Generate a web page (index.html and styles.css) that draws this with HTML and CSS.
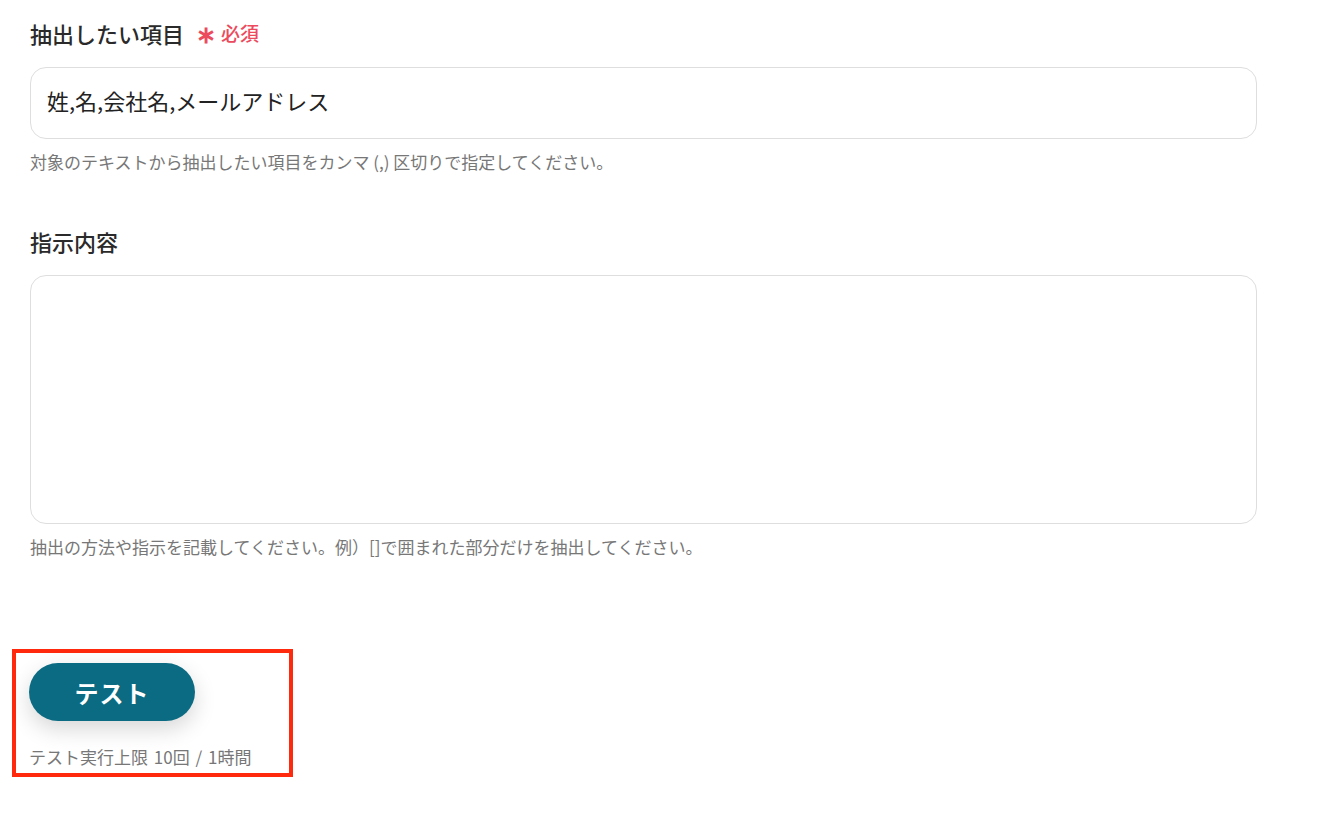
FILE: index.html
```html
<!DOCTYPE html>
<html lang="ja">
<head>
<meta charset="utf-8">
<title>抽出設定</title>
<link rel="stylesheet" href="styles.css">
</head>
<body>
<main class="form">
  <section class="field field-first">
    <div class="label">抽出したい項目<span class="required"><span class="star">∗</span>必須</span></div>
    <div class="input">姓,名,会社名,メールアドレス</div>
    <p class="help">対象のテキストから抽出したい項目をカンマ (,) 区切りで指定してください。</p>
  </section>
  <section class="field field-second">
    <div class="label">指示内容</div>
    <div class="textarea"></div>
    <p class="help">抽出の方法や指示を記載してください。例）[]で囲まれた部分だけを抽出してください。</p>
  </section>
  <div class="test-box">
    <button class="test-btn" type="button">テスト</button>
    <p class="limit">テスト実行上限 10回 / 1時間</p>
  </div>
</main>
</body>
</html>
```
FILE: styles.css
```css
html, body {
  margin: 0;
  padding: 0;
  background: #ffffff;
}
body {
  font-family: "Noto Sans CJK JP", "Noto Sans", sans-serif;
  color: #2b2b2b;
}
.form {
  padding: 19px 0 0 30px;
  width: 1227px;
}
.label {
  font-size: 22px;
  line-height: 28px;
  font-weight: 500;
  color: #2a2a2a;
  display: flex;
  align-items: center;
}
.required {
  color: #ec4a5d;
  font-size: 19px;
  margin-left: 12px;
  display: flex;
  align-items: center;
}
.star {
  font-size: 24px;
  font-weight: 700;
  margin-right: 5px;
  line-height: 1;
}
.input {
  margin-top: 20px;
  height: 72px;
  box-sizing: border-box;
  border: 1px solid #dedede;
  border-radius: 16px;
  padding: 0 16px 6px;
  display: flex;
  align-items: center;
  font-size: 22px;
  color: #222;
}
.textarea {
  margin-top: 20px;
  height: 249px;
  box-sizing: border-box;
  border: 1px solid #dedede;
  border-radius: 16px;
}
.help {
  margin: 12px 0 0;
  font-size: 17px;
  line-height: 22px;
  color: #777;
}
.field-second {
  margin-top: 54px;
}
.test-box {
  margin: 91px 0 0 -18px;
  width: 260px;
  border: 4px solid #ff2a0d;
  padding: 10px 0 5px 13px;
}
.test-btn {
  display: block;
  width: 166px;
  height: 58px;
  border: none;
  border-radius: 29px;
  background: #0b6b82;
  color: #fff;
  font-family: inherit;
  font-size: 24px;
  font-weight: 700;
  letter-spacing: 1px;
  box-shadow: 0 8px 22px rgba(0, 0, 0, 0.16);
  cursor: pointer;
}
.limit {
  margin: 25px 0 0;
  font-size: 17px;
  line-height: 22px;
  color: #777;
  word-spacing: 2px;
}
```
